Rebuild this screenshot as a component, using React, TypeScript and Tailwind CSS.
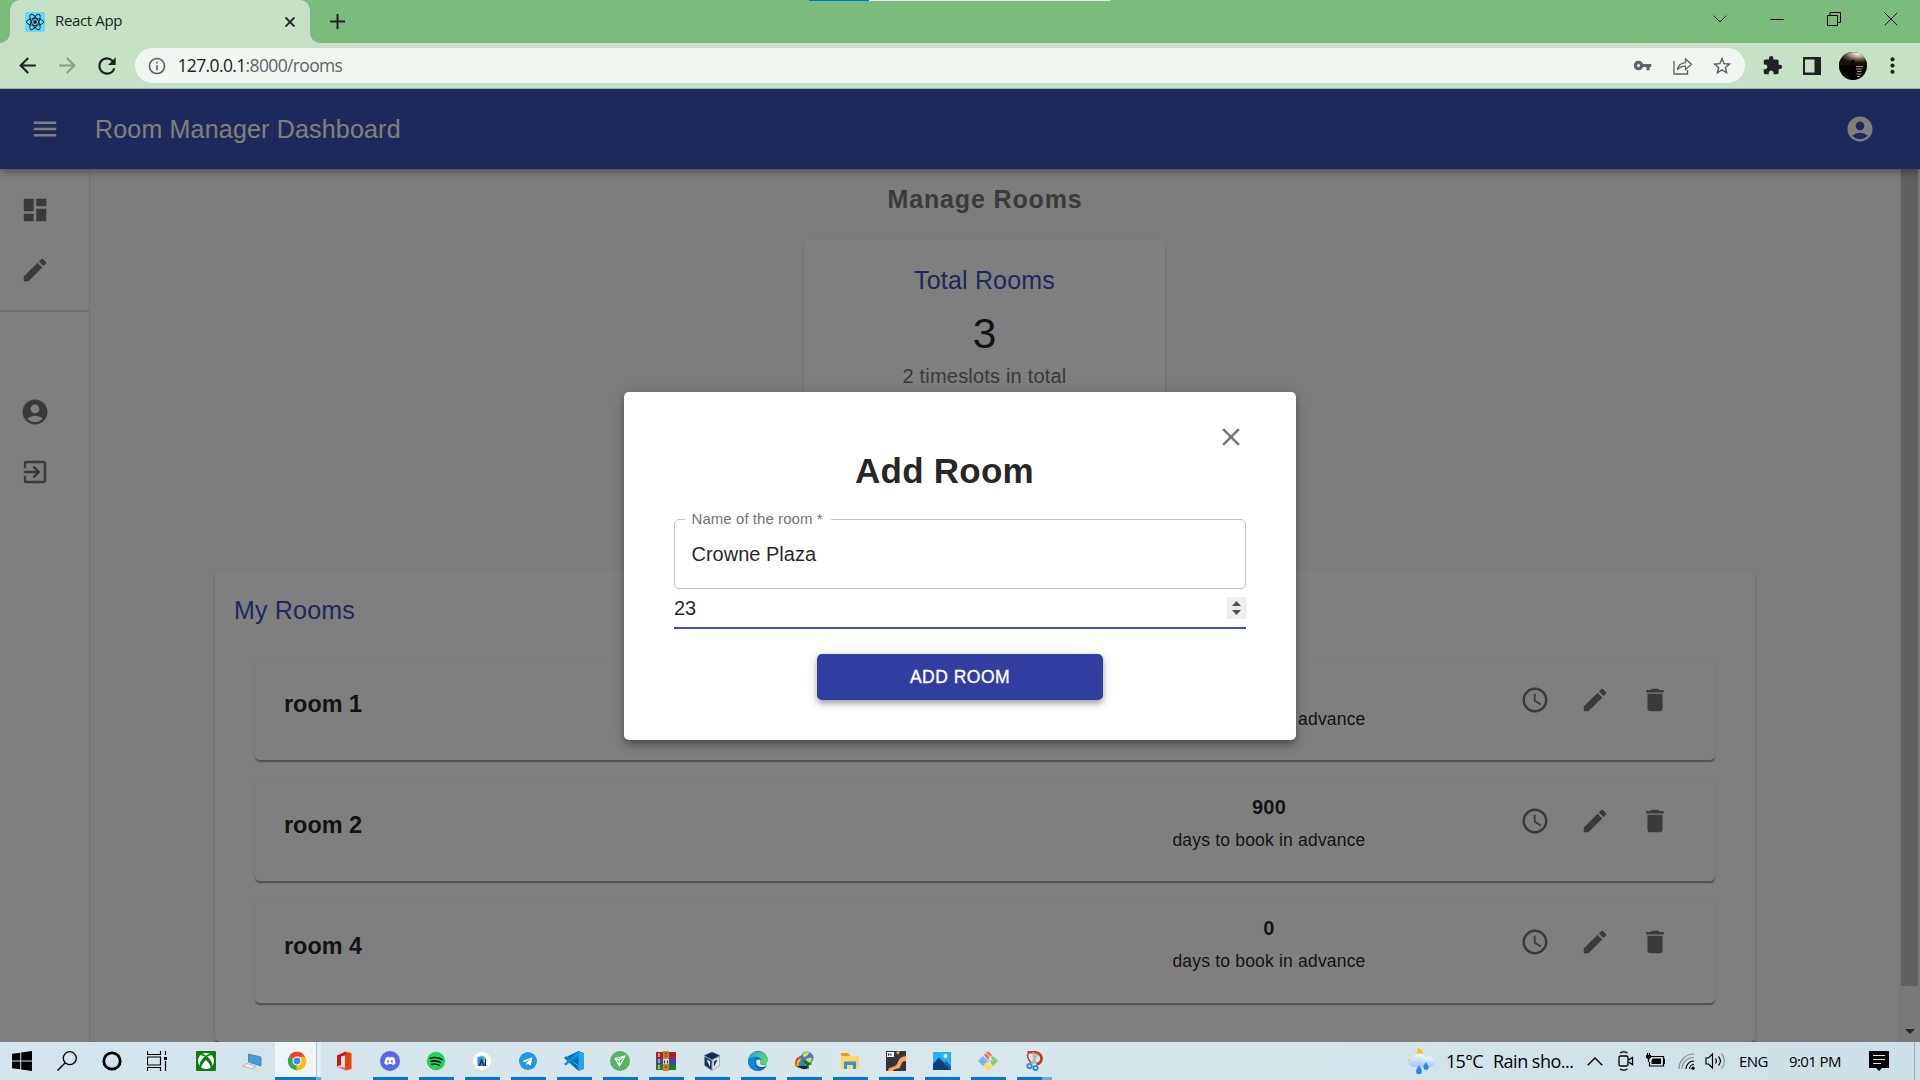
import type { ReactNode } from "react";
import {
  MdAccessTime,
  MdAccountCircle,
  MdArrowBack,
  MdArrowForward,
  MdClose,
  MdDashboard,
  MdDelete,
  MdEdit,
  MdExitToApp,
  MdExtension,
  MdInfoOutline,
  MdMenu,
  MdMoreVert,
  MdRefresh,
  MdStarBorder,
  MdVpnKey,
} from "react-icons/md";
import { FaDiscord, FaTelegramPlane } from "react-icons/fa";

/* ---------- Browser chrome ---------- */

function ReactFavicon() {
  return (
    <svg viewBox="0 0 20 20" className="size-5">
      <rect width="20" height="20" rx="2" fill="#61dafb" />
      <g fill="none" stroke="#1c2a33" strokeWidth="1">
        <ellipse cx="10" cy="10" rx="8.6" ry="3.4" />
        <ellipse cx="10" cy="10" rx="8.6" ry="3.4" transform="rotate(60 10 10)" />
        <ellipse cx="10" cy="10" rx="8.6" ry="3.4" transform="rotate(120 10 10)" />
      </g>
      <circle cx="10" cy="10" r="1.9" fill="#1c2a33" />
    </svg>
  );
}

function WindowButton({ children }: { children: ReactNode }) {
  return (
    <div className="flex h-[37px] w-[57px] items-center justify-center">
      <svg viewBox="0 0 14 14" className="size-3.5" fill="none" stroke="#000" strokeWidth="1">
        {children}
      </svg>
    </div>
  );
}

function TabStrip() {
  return (
    <div className="relative flex h-[43px] bg-[#7bbc7d]">
      <div className="absolute left-[809px] top-0 flex h-px w-[301px] bg-[#e6e6e6]">
        <div className="h-px w-[60px] bg-[#0078d7]" />
      </div>
      <div className="w-2.5 bg-[#c6e1c6]">
        <div className="h-full rounded-br-[10px] bg-[#7bbc7d]" />
      </div>
      <div className="flex w-[300px] items-center rounded-t-[10px] bg-[#c6e1c6] pl-[15px]">
        <ReactFavicon />
        <span className="ml-2.5 flex-1 pb-[2px] text-[15px] tracking-[-0.35px] text-[#202124]">React App</span>
        <svg viewBox="0 0 10 10" className="mr-[15px] size-2.5" stroke="#202124" strokeWidth="1.9">
          <path d="M.5.5l9 9M9.5.5l-9 9" />
        </svg>
      </div>
      <div className="w-2.5 bg-[#c6e1c6]">
        <div className="h-full rounded-bl-[10px] bg-[#7bbc7d]" />
      </div>
      <div className="ml-2.5 flex items-center">
        <svg viewBox="0 0 15 15" className="size-[15px]" stroke="#202124" strokeWidth="2">
          <path d="M7.5 0v15M0 7.5h15" />
        </svg>
      </div>
      <div className="ml-auto mr-px flex">
        <WindowButton>
          <path d="M.8 3.7L7 10l6.2-6.3" />
        </WindowButton>
        <WindowButton>
          <path d="M.5 7.5h13" />
        </WindowButton>
        <WindowButton>
          <path d="M.5 3.5h10v10h-10zM3 3.500v-3h10.500v10h-3" />
        </WindowButton>
        <WindowButton>
          <path d="M.7.7l12.600 12.600M13.300.7L.7 13.300" />
        </WindowButton>
      </div>
    </div>
  );
}

function Toolbar() {
  return (
    <div className="flex h-[46px] items-center border-b border-[#9ab49b] bg-[#c6e1c6] text-[#202124]">
      <MdArrowBack className="ml-[15px] size-[25px]" />
      <MdArrowForward className="ml-[15px] size-[25px] text-[#86a187]" />
      <MdRefresh className="ml-[14px] size-[26px]" />
      <div className="ml-[15px] flex h-[35px] w-[1610px] items-center rounded-full bg-[#f0f7f1] text-[#5f6368]">
        <MdInfoOutline className="ml-[12px] size-[20px]" />
        <div className="ml-[10.500px] text-[17.500px] tracking-[-0.64px]">
          <span className="text-[#202124]">127.0.0.1</span>:8000/rooms
        </div>
        <MdVpnKey className="ml-auto size-[19px]" />
        <svg viewBox="0 0 20 18" className="ml-[21px] h-[18px] w-5" fill="none" stroke="#5f6368" strokeWidth="1.300">
          <path d="M1 4v13h13.500v-4M4.500 13C5 8.500 7.500 6 12.500 5.700V2l6 5.300-6 5.300V9.200C9 9 6.500 10 4.500 13z" />
        </svg>
        <MdStarBorder className="ml-[18px] mr-[12px] size-[22px]" />
      </div>
      <MdExtension className="ml-[17px] size-[21px]" />
      <svg viewBox="0 0 18 18" className="ml-[20px] size-[18px]">
        <path fill="#202124" d="M0 0h18v18H0zM2 2.500v13h9.500v-13z" fillRule="evenodd" />
      </svg>
      <svg viewBox="0 0 28 28" className="ml-[18px] size-7">
        <defs>
          <radialGradient id="moon" cx="70%" cy="12%" r="70%">
            <stop offset="0" stopColor="#fff6e8" />
            <stop offset=".3" stopColor="#c9b9a4" />
            <stop offset=".7" stopColor="#5b4f42" />
            <stop offset="1" stopColor="#17110c" />
          </radialGradient>
          <clipPath id="face">
            <circle cx="14" cy="14" r="14" />
          </clipPath>
        </defs>
        <g clipPath="url(#face)">
          <rect width="28" height="28" fill="#050403" />
          <rect width="28" height="13" fill="url(#moon)" />
          <path stroke="#a89a84" strokeWidth="1" d="M17 14.500h7M17 17h6.500M18 19.500h4.500M17.500 22h5M18 24.500h3" />
          <path d="M12.500 8h3v11l1 9h-5l1-9z" fill="#020202" />
        </g>
      </svg>
      <MdMoreVert className="ml-[13px] size-[25px]" />
    </div>
  );
}

/* ---------- Page ---------- */

function Sidebar() {
  return (
    <aside className="flex w-[90px] shrink-0 flex-col border-r border-black/12 bg-white text-[#757575]">
      <div className="flex h-[143px] flex-col gap-[30px] border-b-2 border-black/12 pl-5 pt-[26px]">
        <MdDashboard className="size-[30px]" />
        <MdEdit className="size-[30px]" />
      </div>
      <div className="flex flex-col gap-[30px] pl-5 pt-[85px]">
        <MdAccountCircle className="size-[30px]" />
        <MdExitToApp className="size-[30px]" />
      </div>
    </aside>
  );
}

const rooms = [
  { name: "room 1", days: "" },
  { name: "room 2", days: "900" },
  { name: "room 4", days: "0" },
];

function RoomRow({ name, days }: { name: string; days: string }) {
  return (
    <div className="flex h-[101.200px] rounded-[5px] bg-white pl-[29px] pr-[30px] shadow-[0_2.500px_1.250px_-1.250px_rgba(0,0,0,0.2),0_1.250px_1.250px_0_rgba(0,0,0,0.14),0_1.250px_3.750px_0_rgba(0,0,0,0.12)]">
      <h3 className="flex-1 pt-[30px] text-[23.400px] font-bold leading-[30px]">{name}</h3>
      <div className="mr-[136px] w-[200px] pt-[11px] text-center leading-[33px]">
        <p className="h-[33px] text-[20px] font-bold tracking-[0.19px]">{days}</p>
        <p className="text-[17.500px] tracking-[0.19px]">days to book in advance</p>
      </div>
      <div className="flex gap-[30px] px-[15px] pt-[26px] text-[#757575]">
        <MdAccessTime className="size-[30px]" />
        <MdEdit className="size-[30px]" />
        <MdDelete className="size-[30px]" />
      </div>
    </div>
  );
}

function RoomsPage() {
  return (
    <main className="flex-1 bg-[#fafafa] pl-[125px] pr-[144px] pt-2.5">
      <h2 className="text-center text-[25px] font-bold leading-10 tracking-[0.85px] text-[#757575]">Manage Rooms</h2>
      <section className="ml-[589px] mt-[21px] h-[300px] w-[361px] rounded-[5px] bg-white pt-5 text-center shadow-[0_2.500px_1.250px_-1.250px_rgba(0,0,0,0.2),0_1.250px_1.250px_0_rgba(0,0,0,0.14),0_1.250px_3.750px_0_rgba(0,0,0,0.12)]">
        <h2 className="text-[25px] leading-10 tracking-[0.19px] text-[#3f51b5]">Total Rooms</h2>
        <p className="text-[42.500px] leading-[67px]">3</p>
        <p className="text-[20px] leading-[18px] tracking-[0.19px] text-[#757575]">2 timeslots in total</p>
      </section>
      <section className="mt-[30px] h-[472px] rounded-[5px] bg-white px-5 pt-5 shadow-[0_2.500px_1.250px_-1.250px_rgba(0,0,0,0.2),0_1.250px_1.250px_0_rgba(0,0,0,0.14),0_1.250px_3.750px_0_rgba(0,0,0,0.12)]">
        <h2 className="-ml-px text-[25px] leading-[41px] tracking-[0.19px] text-[#3f51b5]">My Rooms</h2>
        <div className="flex flex-col gap-5 px-5 pt-7">
          {rooms.map((r) => (
            <RoomRow key={r.name} {...r} />
          ))}
        </div>
      </section>
    </main>
  );
}

function Scrollbar() {
  return (
    <div className="flex w-[21px] shrink-0 flex-col items-center bg-[#f1f1f1]">
      <div className="h-[817px] w-[17px] bg-[#c1c1c1]" />
      <svg viewBox="0 0 10 5" className="mb-2 mt-auto h-[5px] w-2.5">
        <path d="M0 0h10L5 5z" fill="#505050" />
      </svg>
    </div>
  );
}

function AddRoomDialog() {
  return (
    <div className="absolute left-[624px] top-[303px] flex h-[348px] w-[672px] flex-col rounded-[5px] bg-white px-[50px] pt-[30px] shadow-[0_3.750px_6.250px_-1.250px_rgba(0,0,0,0.2),0_6.250px_10px_0_rgba(0,0,0,0.14),0_1.250px_17.500px_0_rgba(0,0,0,0.12)]">
      <MdClose className="size-[30px] self-end text-[#757575]" />
      <h1 className="-mt-px pr-[31px] text-center text-[35px] font-bold leading-10 tracking-[0.25px]">Add Room</h1>
      <div className="relative mt-7 flex h-[70px] items-center rounded-[5px] border border-[#c4c4c4] pl-[16.500px] text-[20px]">
        <label className="absolute -top-[11px] left-2.5 bg-white pl-[6.500px] pr-2 text-[15px] leading-5 tracking-[0.06px] text-[#757575]">
          Name of the room *
        </label>
        Crowne Plaza
      </div>
      <div className="flex h-10 items-center justify-between border-b-2 border-[#3f51b5] text-[20px]">
        23
        <div className="flex h-[22px] w-[19px] flex-col items-center justify-center gap-1 bg-[#efefef]">
          <svg viewBox="0 0 9 5" className="h-[5px] w-[9px]">
            <path d="M0 5L4.500 0 9 5z" fill="#505050" />
          </svg>
          <svg viewBox="0 0 9 5" className="h-[5px] w-[9px]">
            <path d="M0 0h9L4.500 5z" fill="#505050" />
          </svg>
        </div>
      </div>
      <button className="mt-[25px] h-[46px] w-[286px] self-center rounded-[5px] bg-[#303f9f] text-[17.500px] tracking-[0.5px] text-white antialiased shadow-[0_2.500px_5px_-1.250px_rgba(0,0,0,0.2),0_5px_6.250px_0_rgba(0,0,0,0.14),0_1.250px_12.500px_0_rgba(0,0,0,0.12)] [-webkit-text-stroke:0.35px]">
        ADD ROOM
      </button>
    </div>
  );
}

function WebPage() {
  return (
    <div className="relative flex h-[953px] flex-col overflow-hidden font-['Liberation_Sans',sans-serif] text-black/87">
      <header className="relative flex h-20 shrink-0 items-center bg-[#3f51b5] pl-[30px] text-white shadow-[0_2.500px_5px_-1.250px_rgba(0,0,0,0.2),0_5px_6.250px_0_rgba(0,0,0,0.14),0_1.250px_12.500px_0_rgba(0,0,0,0.12)]">
        <MdMenu className="size-[30px]" />
        <h1 className="ml-[35px] pt-[2px] text-[25px] tracking-[0.19px]">Room Manager Dashboard</h1>
        <MdAccountCircle className="ml-auto mr-[45px] size-[30px]" />
      </header>
      <div className="flex min-h-0 flex-1">
        <Sidebar />
        <RoomsPage />
        <Scrollbar />
      </div>
      <div className="absolute inset-0 bg-black/50" />
      <AddRoomDialog />
    </div>
  );
}

/* ---------- Taskbar ---------- */

function Glyph({ children }: { children: ReactNode }) {
  return (
    <svg viewBox="0 0 20 20" className="size-5" fill="none">
      {children}
    </svg>
  );
}

const systemIcons: ReactNode[] = [
  <Glyph key="start">
    <path fill="#000" d="M0 2.800L8.200 1.700v7.800H0zM9.200 1.500L20 0v9.500H9.200zM0 10.500h8.200v7.800L0 17.200zM9.200 10.500H20V20L9.200 18.500z" />
  </Glyph>,
  <Glyph key="search">
    <circle cx="12.800" cy="7.200" r="6.500" stroke="#000" strokeWidth="1.300" />
    <path d="M8 12L.5 19.500" stroke="#000" strokeWidth="1.400" />
  </Glyph>,
  <Glyph key="cortana">
    <circle cx="10" cy="10" r="8.200" stroke="#000" strokeWidth="2.800" />
  </Glyph>,
  <Glyph key="tasks">
    <path d="M.5 0v3.500h13V0M.5 20v-3.500h13V20M.5 6h13v8H.500zM18.500 0v4M18.500 10v10" stroke="#000" strokeWidth="1.200" />
    <path d="M17 6h3v3h-3z" fill="#000" />
  </Glyph>,
];

const appIcons: { id: string; open: boolean; icon: ReactNode }[] = [
  {
    id: "xbox",
    open: false,
    icon: (
      <Glyph>
        <rect width="20" height="20" rx="1" fill="#107c10" />
        <circle cx="10" cy="10" r="8" fill="#fff" />
        <path d="M4.500 3.500c2 0 4 .8 5.500 2 1.500-1.200 3.500-2 5.500-2" stroke="#107c10" strokeWidth="1.500" />
        <path d="M10 4.800C6 7.500 3.200 11.500 3.600 15.800L5 17c.6-3 2.600-6 5-8 2.400 2 4.400 5 5 8l1.400-1.200C16.800 11.500 14 7.500 10 4.800z" fill="#107c10" />
      </Glyph>
    ),
  },
  {
    id: "remote",
    open: false,
    icon: (
      <Glyph>
        <path d="M6.500 3L19 6v9L6.500 11z" fill="#3aa0ea" stroke="#66747f" strokeWidth=".8" />
        <path d="M5 12.500l9 3-4.500 2-9-2.500z" fill="#eef1f3" stroke="#98a3ab" strokeWidth=".7" />
        <path d="M10 19l3.500-1.500 1.500.6-3.500 1.400z" fill="#c2cad0" />
      </Glyph>
    ),
  },
  {
    id: "chrome",
    open: true,
    icon: (
      <Glyph>
        <path d="M10 10L2 5.500A9.200 9.200 0 0 1 18.200 5.900z" fill="#ea4335" />
        <path d="M10 10l8.200-4.100A9.200 9.200 0 0 1 9.600 19.200z" fill="#fbbc04" />
        <path d="M10 10l-.4 9.200A9.200 9.200 0 0 1 2 5.500z" fill="#34a853" />
        <path d="M10 5.700h8.100A9.200 9.200 0 0 1 9.600 19.200l4.100-7z" fill="#fbbc04" />
        <circle cx="10" cy="10" r="4.500" fill="#fff" />
        <circle cx="10" cy="10" r="3.400" fill="#4285f4" />
      </Glyph>
    ),
  },
  {
    id: "office",
    open: false,
    icon: (
      <Glyph>
        <path d="M11 .5L17.500 2v16L11 19.500z" fill="#e8430a" />
        <path d="M3 4.500L11.500.500v3.800L7 5.500v8.500l-4 1.500z" fill="#c11a12" />
        <path d="M3 15.500l8.500 1V19.500z" fill="#ef6e58" />
      </Glyph>
    ),
  },
  {
    id: "discord",
    open: true,
    icon: (
      <div className="flex size-5 items-center justify-center rounded-full bg-[#5865f2]">
        <FaDiscord className="size-3 text-white" />
      </div>
    ),
  },
  {
    id: "spotify",
    open: true,
    icon: (
      <Glyph>
        <circle cx="10" cy="10" r="9.200" fill="#1ed760" />
        <path d="M4 7.300c4-1.300 8.500-.8 12 1.200M4.800 10.500c3.400-1 7-.6 10 1.100M5.500 13.400c2.800-.8 5.500-.4 8 1" stroke="#0b1d12" strokeWidth="1.600" strokeLinecap="round" />
      </Glyph>
    ),
  },
  {
    id: "android-studio",
    open: true,
    icon: (
      <Glyph>
        <circle cx="10" cy="10" r="9" fill="#fff" />
        <path d="M6 6.500c1-2 6-2.500 7.500 0l.5 3H6z" fill="#3ddc84" />
        <path d="M5.500 6h5l3.500 9H5.500z" fill="#4285f4" />
        <path d="M7.500 15l2-6 2.500 6M13.500 8v7" stroke="#073042" strokeWidth="1.200" />
      </Glyph>
    ),
  },
  {
    id: "telegram",
    open: true,
    icon: (
      <div className="flex size-[18px] items-center justify-center rounded-full bg-[#2299d6]">
        <FaTelegramPlane className="mr-px size-[11px] text-white" />
      </div>
    ),
  },
  {
    id: "vscode",
    open: true,
    icon: (
      <Glyph>
        <path d="M14.500 0L20 2.300v15.400L14.500 20v-5.500L1.800 5.500 0 7z" fill="#0072bc" />
        <path d="M0 7l1.800-1.500L14.500 15v5z" fill="#0072bc" />
        <path d="M14.500 0L0 13l1.800 1.500L14.500 5z" fill="#1a8ad4" />
        <path d="M14.500 0L20 2.300v15.400L14.500 20z" fill="#24a5f2" />
      </Glyph>
    ),
  },
  {
    id: "mesh",
    open: true,
    icon: (
      <Glyph>
        <circle cx="10" cy="10" r="10" fill="#56b366" />
        <path d="M5 7.500l10-2.500-5.500 10zM5 7.500l4 1.500.5 6M9 9l6-4" stroke="#fff" strokeWidth="1.100" />
      </Glyph>
    ),
  },
  {
    id: "winrar",
    open: true,
    icon: (
      <Glyph>
        <rect y="1" width="20" height="6" fill="#a8232a" />
        <rect y="7" width="20" height="6" fill="#4a3fa8" />
        <rect y="13" width="20" height="6" fill="#1f7a2d" />
        <path d="M3 2v4M3 8v4M3 14v4" stroke="#f0c23c" strokeWidth="1.500" />
        <rect x="7" width="6" height="20" fill="#c98a2b" />
        <path d="M7 8h6v5H7z" fill="#d9d9d9" />
        <path d="M8.500 2.500h3M8.500 5h3M8.500 9.500v3M11.500 9.500v3M8.500 16h3" stroke="#5a3610" strokeWidth="1.100" />
      </Glyph>
    ),
  },
  {
    id: "virtualbox",
    open: true,
    icon: (
      <Glyph>
        <path d="M10 .5l8 3.500v10.500l-8 5.500-8-5.500V4z" fill="#93a3b8" />
        <path d="M10 1.200l7.500 3.300L10 8.500 2.500 4.500z" fill="#12294f" />
        <path d="M2.800 6L9.500 9.500V19L2.800 14.300z" fill="#16325e" />
        <path d="M17.200 6l-6.700 3.500V19l6.700-4.700z" fill="#dfe6ee" />
        <path d="M4.500 8.500L8 16V10.300z" fill="#e9eef4" />
        <path d="M15.500 8.500L12 16l-.2-5.700z" fill="#16325e" />
      </Glyph>
    ),
  },
  {
    id: "edge",
    open: true,
    icon: (
      <Glyph>
        <defs>
          <linearGradient id="edgeTop" x1="0" y1="0" x2="1" y2=".5">
            <stop offset="0" stopColor="#2aa7e0" />
            <stop offset="1" stopColor="#5bd75b" />
          </linearGradient>
        </defs>
        <circle cx="10" cy="10" r="10" fill="#0e63b8" />
        <path d="M.2 9A10 10 0 0 1 20 9c.3 3-2 4.800-4.500 4.800-2 0-3.300-.8-3.300-1.800 0-.9.800-1.300.8-2.800C13 7 10.500 5.700 7.500 5.700 3.500 5.700.5 7.500.2 9z" fill="url(#edgeTop)" />
        <path d="M8.500 9.500c-1.500 4 2.500 8 8.300 6 .8-.3 2-.9 2-.9l1.200-.6V9.500l-2 4c-2 1-5.800.7-5.800-1.500 0-1 .5-1.300.5-2.500-1-1.500-3.500-1-4.200 0z" fill="#d6e4ea" />
        <path d="M0 10c0-3.500 5-5.500 9-3-3 3-2.500 8 1.500 11.500L9 20C4 19.500 0 15.500 0 10z" fill="#1583d8" />
      </Glyph>
    ),
  },
  {
    id: "idm",
    open: true,
    icon: (
      <Glyph>
        <path d="M1.500 15C-.5 8 5 4 10 4.500l1 9-7 3z" fill="#e23b2e" />
        <path d="M2.800 15.500C1.500 9.500 6 5.800 11 6.200l0 8-6 2z" fill="#f4c430" />
        <path d="M4.500 15.500C3.500 11 7.500 7.500 11 8l0 7-5 1z" fill="#35a04a" />
        <path d="M6 15.500c-.5-3 2-6 5-6v6z" fill="#3a76d8" />
        <circle cx="13" cy="7" r="6.500" fill="#3f7fc4" />
        <path d="M8.500 3.800c2-3 5-3.300 7-2.300l-2 3-3.500 2zM11.500 8l5-1.500 2 1.500-3 4.500z" fill="#e0dc54" />
        <path d="M8.500 8.500l10 4.500-3.500 1.300-.5 4.200z" fill="#0f7a1d" />
        <path d="M2 15.500l7.500 2.800 4.500-.8-1.500-3z" fill="#1c2420" />
      </Glyph>
    ),
  },
  {
    id: "explorer",
    open: true,
    icon: (
      <Glyph>
        <path d="M1 2h7l2 2.500v3H1z" fill="#e3a21a" />
        <path d="M1 5h18v12.500H1z" fill="#ffd767" />
        <path d="M4 18v-7.500h12V18h-3v-4H7v4z" fill="#3b8fd9" />
      </Glyph>
    ),
  },
  {
    id: "sublime",
    open: true,
    icon: (
      <Glyph>
        <rect width="20" height="20" fill="#33353b" />
        <path d="M2 20c0-5 7-3 9-7s2-7 9-8v5c-5 0-4 3-6 6s-6 1-7 4zM10 1l4-1-2 4z" fill="#f9a45a" />
        <rect x="1" y="1" width="7" height="5" fill="#fff" />
        <path d="M2.500 5V2.500L4 4l1-1.500V5" stroke="#333" strokeWidth=".8" />
      </Glyph>
    ),
  },
  {
    id: "photos",
    open: true,
    icon: (
      <Glyph>
        <rect x="1" y="1" width="18" height="18" fill="#27b0ef" />
        <path d="M1 13l6-6.500L19 19H1z" fill="#123f7c" />
        <path d="M12 12l2-2 5 5v4z" fill="#1763ad" />
        <circle cx="13.500" cy="5" r="2" fill="#fff" />
      </Glyph>
    ),
  },
  {
    id: "git",
    open: true,
    icon: (
      <Glyph>
        <path d="M10 0l4 4-4 5-4-5z" fill="#f0706a" />
        <path d="M5 5l5 5-5 5-5-5z" fill="#7fb0f5" />
        <path d="M15 5l5 5-5 5-5-5z" fill="#85cf72" />
        <path d="M10 11l5 4.500-5 4.500-5-4.500z" fill="#f8dc6c" />
        <path d="M8.500 2.500L12 6v8M12 7l3 3" stroke="#fff" strokeWidth="1" />
      </Glyph>
    ),
  },
  {
    id: "snip",
    open: true,
    icon: (
      <Glyph>
        <path d="M3.500 2c6-2.500 13.500-.5 14 5 .3 4-2.500 6-5 6" stroke="#c93a1d" strokeWidth="2.800" />
        <path d="M3.500 3c0 4 1.500 7 4 9" stroke="#c93a1d" strokeWidth="1.600" />
        <path d="M9 1.500l2.500 11.500M13 3L8 13" stroke="#aab2b9" strokeWidth="2" />
        <circle cx="5.500" cy="15" r="2.200" stroke="#1c8fdc" strokeWidth="1.800" />
        <circle cx="11.500" cy="17" r="2.200" stroke="#1c8fdc" strokeWidth="1.800" />
      </Glyph>
    ),
  },
];

function AppButton({ id, open, icon }: { id: string; open: boolean; icon: ReactNode }) {
  if (id === "chrome") {
    return (
      <div className="flex w-[46px]">
        <div className="flex w-[41px] flex-col items-center border-b-[3px] border-[#0078d7] bg-[#eff4f8] pt-[9px]">
          <span className="ml-[3px]">{icon}</span>
        </div>
        <div className="w-[5px] border-b-[3px] border-l border-b-[#62a9e4] border-l-[#b4c4ce] bg-[#e4edf3]" />
      </div>
    );
  }
  return (
    <div className="flex w-[46px] flex-col items-center">
      <div className="flex flex-1 items-center pt-[3px]">{icon}</div>
      {open ? (
        <div className="flex h-[3px] w-[35px] bg-[#0078d7]">
          {id === "snip" && <div className="ml-auto h-[3px] w-[10px] bg-[#62a9e4]" />}
        </div>
      ) : (
        <div className="h-[3px]" />
      )}
    </div>
  );
}

function WeatherIcon() {
  return (
    <svg viewBox="0 0 28 28" className="size-7 shrink-0">
      <defs>
        <linearGradient id="cloud" x1="0" y1="0" x2="0" y2="1">
          <stop offset="0" stopColor="#f2f9ff" />
          <stop offset="1" stopColor="#9cc9f4" />
        </linearGradient>
      </defs>
      <path d="M11 .5c3.500 2 5.500 5 5.500 9L6 16c-2.500-.5-4.500-1.500-5.500-3.500 6-.5 10.500-5 10.500-12z" fill="#fbbf16" />
      <path d="M6.500 20a4.500 4.500 0 0 1-.5-9A7 7 0 0 1 18.500 10a5.500 5.500 0 0 1 2.500 10z" fill="url(#cloud)" />
      <circle cx="21.500" cy="15" r="5.800" fill="url(#cloud)" />
      <path d="M19 15s-2.600 3.500-2.600 5.200a2.600 2.600 0 0 0 5.200 0C21.600 18.500 19 15 19 15zM12 18.500s-3 3.800-3 5.800a3 3 0 0 0 6 0c0-2-3-5.800-3-5.800z" fill="#2b8ae6" />
    </svg>
  );
}

function Tray() {
  return (
    <div className="ml-auto flex items-center text-black">
      <WeatherIcon />
      <span className="ml-[11px] w-[47px] text-[18px] tracking-[-0.7px]">15°C</span>
      <span className="w-[92px] whitespace-nowrap text-[18px] tracking-[-0.5px]">Rain sho...</span>
      <svg viewBox="0 0 16 9" className="ml-[2px] h-[9px] w-4" fill="none" stroke="#000" strokeWidth="1.400">
        <path d="M.7 8.300L8 1l7.300 7.300" />
      </svg>
      <svg viewBox="0 0 16 20" className="ml-[15px] h-5 w-4" fill="none" stroke="#000" strokeWidth="1.300">
        <rect x="1" y="5" width="9" height="10" rx="1.500" />
        <path d="M10.500 9L14.500 6.500v7L10.500 11M2 2c2.500-1.600 5-1.600 7.500 0M2 18c2.500 1.600 5 1.600 7.500 0" />
      </svg>
      <svg viewBox="0 0 20 16" className="ml-[11px] h-4 w-5" fill="none" stroke="#000" strokeWidth="1.200">
        <path d="M6 3.500h12.500v9.500H4.500V9M18.500 6h1.200v4.500h-1.200M2.500 0v2M4.500 0v2M3.500 5v4" />
        <path d="M7.500 5.500h8.500v5.500H6.500V8zM1 2h5v2.500L4.500 6H2.500L1 4.500z" fill="#000" stroke="none" />
      </svg>
      <svg viewBox="0 0 17 17" className="ml-[13px] size-[17px]" fill="none" stroke="#000" strokeWidth="1.200">
        <path d="M1 16C1 8 7 1 16 1M4 16C4 9.500 9 4.500 16 4.500" stroke="#868e92" />
        <path d="M8 16c0-4.500 3.500-8 8-8M11.500 16c0-2.500 2-4.500 4.500-4.500" />
        <circle cx="15" cy="15.200" r="1.600" fill="#000" stroke="none" />
      </svg>
      <svg viewBox="0 0 21 18" className="ml-[10px] h-[18px] w-[21px]" fill="none" stroke="#000" strokeWidth="1.200">
        <path d="M1 6h2.500L7.500 2v14l-4-4H1zM10.500 6.500c1.200 1.600 1.200 3.500 0 5M13.500 4.500c2.400 2.800 2.400 6.200 0 9" />
        <path d="M16.500 1.500c3.800 4.500 3.800 10.500 0 15" stroke="#8b9498" />
      </svg>
      <span className="ml-[13px] w-[49px] text-[15px] tracking-[-0.6px]">ENG</span>
      <span className="w-[81px] shrink-0 whitespace-nowrap pl-px pr-7 text-[15px] tracking-[-0.6px]">9:01 PM</span>
      <svg viewBox="0 0 20 20" className="size-5">
        <path d="M0 0h20v17h-7l-3 3-3-3H0z" fill="#000" />
        <path d="M4 4.500h12M4 8.500h12M4 12.500h8" stroke="#dbe9ef" strokeWidth="1.200" />
      </svg>
      <div className="ml-[25px] h-[38px] w-[6px] border-l border-[#9fb0b8]" />
    </div>
  );
}

function Taskbar() {
  return (
    <footer className="flex h-[38px] bg-linear-to-r from-[#d4e3ec] via-[#d7e7eb] to-[#cfdfe7]">
      <div className="-ml-px mr-1 flex">
        {systemIcons.map((icon, i) => (
          <div key={i} className="flex w-[45px] items-center justify-center">
            {icon}
          </div>
        ))}
      </div>
      {appIcons.map((app) => (
        <AppButton key={app.id} {...app} />
      ))}
      <Tray />
    </footer>
  );
}

export default function App() {
  return (
    <div className="h-[1080px] w-[1920px] overflow-hidden font-['Open_Sans','Noto_Sans',sans-serif]">
      <TabStrip />
      <Toolbar />
      <WebPage />
      <Taskbar />
    </div>
  );
}
